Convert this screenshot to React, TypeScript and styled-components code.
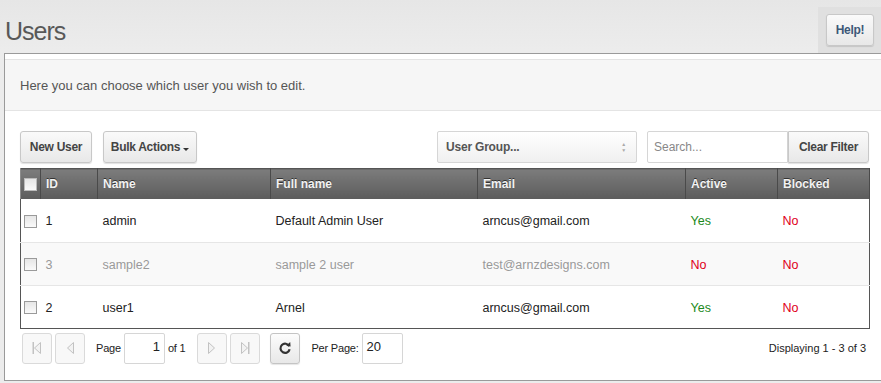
import React from "react";
import styled, { createGlobalStyle } from "styled-components";

const GlobalStyle = createGlobalStyle`
  html, body {
    margin: 0;
    padding: 0;
    background: #ebebeb;
    font-family: "Liberation Sans", Arial, sans-serif;
    font-size: 13px;
    color: #222;
  }
`;

interface User {
  id: number;
  name: string;
  fullName: string;
  email: string;
  active: boolean;
  blocked: boolean;
  muted?: boolean;
}

const users: User[] = [
  { id: 1, name: "admin", fullName: "Default Admin User", email: "arncus@gmail.com", active: true, blocked: false },
  { id: 3, name: "sample2", fullName: "sample 2 user", email: "test@arnzdesigns.com", active: false, blocked: false, muted: true },
  { id: 2, name: "user1", fullName: "Arnel", email: "arncus@gmail.com", active: true, blocked: false },
];

const columns = [
  { label: "ID", width: 57 },
  { label: "Name", width: 173 },
  { label: "Full name", width: 207 },
  { label: "Email", width: 208 },
  { label: "Active", width: 92 },
  { label: "Blocked", width: 92 },
];

function PagerIcon({ kind }: { kind: "first" | "prev" | "next" | "last" }) {
  const flip = kind === "first" || kind === "prev";
  const bar = kind === "first" || kind === "last";
  return (
    <svg width="12" height="14" viewBox="0 0 12 14" style={{ transform: flip ? "scaleX(-1)" : undefined }}>
      <path d="M2.5 1.5 L8.5 7 L2.5 12.5 Z" fill="#f2f2f2" stroke="#c2c2c2" strokeWidth="1" />
      {bar && <rect x="9" y="1" width="1.5" height="12" fill="#c2c2c2" />}
    </svg>
  );
}

function RefreshIcon() {
  return (
    <svg width="14" height="14" viewBox="0 0 14 14">
      <path d="M11.2 5.2 A4.6 4.6 0 1 0 11.6 8.2" fill="none" stroke="#333" strokeWidth="2.2" />
      <path d="M8.2 4.8 L12.6 5.4 L12.2 1 Z" fill="#333" />
    </svg>
  );
}

export default function App() {
  return (
    <>
      <GlobalStyle />
      <Page>
        <TopBar>
          <Title>Users</Title>
          <HelpBox>
            <Button $help $width={48}>Help!</Button>
          </HelpBox>
        </TopBar>
        <Panel>
          <Intro>Here you can choose which user you wish to edit.</Intro>
          <Content>
            <Toolbar>
              <Button $width={72}>New User</Button>
              <Button $width={94}>
                Bulk Actions <Caret />
              </Button>
              <Spacer />
              <Select>
                <span>User Group...</span>
                <Arrows>
                  <span>▲</span>
                  <span>▼</span>
                </Arrows>
              </Select>
              <Search placeholder="Search..." />
              <Button $flat $width={81}>Clear Filter</Button>
            </Toolbar>
            <Table>
              <colgroup>
                <col style={{ width: 20 }} />
                {columns.map((c) => (
                  <col key={c.label} style={{ width: c.width }} />
                ))}
              </colgroup>
              <thead>
                <tr>
                  <Th>
                    <Check $dark />
                  </Th>
                  {columns.map((c) => (
                    <Th key={c.label}>{c.label}</Th>
                  ))}
                </tr>
              </thead>
              <tbody>
                {users.map((u) => (
                  <Row key={u.id} $muted={u.muted}>
                    <Td $check>
                      <Check />
                    </Td>
                    <Td>{u.id}</Td>
                    <Td>{u.name}</Td>
                    <Td>{u.fullName}</Td>
                    <Td>{u.email}</Td>
                    <Td>
                      <Flag $on={u.active}>{u.active ? "Yes" : "No"}</Flag>
                    </Td>
                    <Td>
                      <Flag $on={u.blocked}>{u.blocked ? "Yes" : "No"}</Flag>
                    </Td>
                  </Row>
                ))}
              </tbody>
            </Table>
            <Pager>
              <PagerGroup>
                <PageButton disabled>
                  <PagerIcon kind="first" />
                </PageButton>
                <PageButton disabled>
                  <PagerIcon kind="prev" />
                </PageButton>
              </PagerGroup>
              <PagerLabel>Page</PagerLabel>
              <PageInput $right>1</PageInput>
              <PagerLabel $tight>of 1</PagerLabel>
              <PagerGroup>
                <PageButton disabled>
                  <PagerIcon kind="next" />
                </PageButton>
                <PageButton disabled>
                  <PagerIcon kind="last" />
                </PageButton>
              </PagerGroup>
              <PageButton $raised>
                <RefreshIcon />
              </PageButton>
              <PagerLabel>Per Page:</PagerLabel>
              <PageInput>20</PageInput>
              <Spacer />
              <Summary>Displaying 1 - 3 of 3</Summary>
            </Pager>
          </Content>
        </Panel>
      </Page>
    </>
  );
}

const Page = styled.div`
  width: 881px;
  height: 383px;
  overflow: hidden;
  background: linear-gradient(#e6e6e6, #ececec 50px);
`;

const TopBar = styled.div`
  display: flex;
  align-items: flex-start;
  justify-content: space-between;
  height: 53px;
`;

const Title = styled.h1`
  margin: 15px 0 0 5px;
  font-weight: normal;
  font-size: 25px;
  line-height: 32px;
  color: #585858;
  letter-spacing: -1px;
`;

const HelpBox = styled.div`
  margin-top: 7px;
  width: 63px;
  height: 46px;
  box-sizing: border-box;
  padding: 7px 0 0 8px;
  background: #e0e0e0;
`;

const Button = styled.button<{ $help?: boolean; $flat?: boolean; $width: number }>`
  display: inline-flex;
  align-items: center;
  justify-content: center;
  flex: none;
  width: ${(p) => p.$width}px;
  height: 32px;
  padding: 0;
  border: 1px solid #c8c8c8;
  border-radius: ${(p) => (p.$flat ? "0 3px 3px 0" : "3px")};
  background: linear-gradient(#fafafa, #e8e8e8);
  box-shadow: 0 1px 1px rgba(0, 0, 0, 0.12);
  font-family: "Liberation Sans", Arial, sans-serif;
  font-weight: bold;
  font-size: 12px;
  letter-spacing: -0.3px;
  color: ${(p) => (p.$help ? "#3d5878" : "#444")};
  cursor: pointer;
  white-space: nowrap;
`;

const Caret = styled.span`
  display: inline-block;
  margin-left: 3px;
  margin-top: 4px;
  border-left: 3px solid transparent;
  border-right: 3px solid transparent;
  border-top: 3px solid #333;
`;

const Panel = styled.div`
  margin-left: 4px;
  height: 328px;
  box-sizing: border-box;
  border-top: 1px solid #9a9a9a;
  border-left: 1px solid #9a9a9a;
  border-bottom: 1px solid #9a9a9a;
  background: #fff;
  padding-top: 5px;
`;

const Intro = styled.div`
  height: 50px;
  display: flex;
  align-items: center;
  padding-left: 15px;
  background: #f6f6f6;
  border-top: 1px solid #e4e4e4;
  border-bottom: 1px solid #e4e4e4;
  color: #555;
  font-size: 13px;
`;

const Content = styled.div`
  padding: 20px 12px 0 15px;
`;

const Toolbar = styled.div`
  display: flex;
  align-items: center;
  gap: 11px;
  height: 32px;
  margin-bottom: 5px;
`;

const Spacer = styled.div`
  flex: 1;
`;

const Select = styled.div`
  display: flex;
  align-items: center;
  justify-content: space-between;
  width: 200px;
  height: 32px;
  box-sizing: border-box;
  padding: 0 10px 0 8px;
  border: 1px solid #d6d6d6;
  border-radius: 2px;
  background: linear-gradient(#fff, #f0f0f0);
  font-weight: bold;
  font-size: 12px;
  letter-spacing: -0.2px;
  color: #555;
`;

const Arrows = styled.div`
  display: flex;
  flex-direction: column;
  font-size: 5px;
  line-height: 6px;
  color: #aaa;
`;

const Search = styled.input`
  width: 141px;
  height: 32px;
  box-sizing: border-box;
  margin-left: -1px;
  margin-right: -11px;
  padding: 0 6px;
  border: 1px solid #d6d6d6;
  border-radius: 2px 0 0 2px;
  font-family: "Liberation Sans", Arial, sans-serif;
  font-size: 12px;
  outline: none;
  &::placeholder {
    color: #888;
  }
`;

const Table = styled.table`
  width: 850px;
  border-collapse: collapse;
  table-layout: fixed;
  border: 1px solid #555;
`;

const Th = styled.th`
  height: 30px;
  padding: 0 5px;
  text-align: left;
  font-size: 12px;
  font-weight: bold;
  color: #f2f2f2;
  text-shadow: 0 -1px 0 #333;
  background: linear-gradient(#7c7c7c, #5c5c5c);
  border-left: 1px solid #8c8c8c;
  border-right: 1px solid #4a4a4a;
  &:first-child {
    padding: 0 3px;
  }
`;

const Row = styled.tr<{ $muted?: boolean }>`
  height: 43px;
  background: ${(p) => (p.$muted ? "#f9f9f9" : "#fff")};
  color: ${(p) => (p.$muted ? "#999" : "#222")};
  & + & {
    border-top: 1px solid #e6e6e6;
  }
`;

const Td = styled.td<{ $check?: boolean }>`
  padding: 2px ${(p) => (p.$check ? "3px" : "5px")} 0;
  font-size: 12.5px;
  white-space: nowrap;
`;

const Check = styled.span<{ $dark?: boolean }>`
  display: block;
  width: 11px;
  height: 11px;
  border: 1px solid ${(p) => (p.$dark ? "#bbb" : "#9a9a9a")};
  background: linear-gradient(#e6e6e6, #fafafa);
`;

const Flag = styled.span<{ $on: boolean }>`
  color: ${(p) => (p.$on ? "#1c8a1c" : "#e0001a")};
`;

const Pager = styled.div`
  display: flex;
  align-items: center;
  height: 31px;
  margin-top: 4px;
  padding-left: 2px;
`;

const PagerGroup = styled.div`
  display: flex;
  gap: 3px;
`;

const PageButton = styled.button<{ $raised?: boolean }>`
  display: flex;
  align-items: center;
  justify-content: center;
  width: 30px;
  height: 31px;
  padding: 0;
  border: 1px solid ${(p) => (p.$raised ? "#c4c4c4" : "#dadada")};
  border-radius: 3px;
  background: ${(p) => (p.$raised ? "linear-gradient(#fcfcfc, #e8e8e8)" : "#f8f8f8")};
  box-shadow: ${(p) => (p.$raised ? "0 1px 1px rgba(0,0,0,0.1)" : "none")};
  margin-left: ${(p) => (p.$raised ? "10px" : "0")};
`;

const PagerLabel = styled.span<{ $tight?: boolean }>`
  margin: 0 ${(p) => (p.$tight ? "12px" : "3px")} 0 ${(p) => (p.$tight ? "3px" : "11px")};
  font-size: 11px;
  letter-spacing: -0.2px;
  color: #222;
`;

const PageInput = styled.div<{ $right?: boolean }>`
  width: 41px;
  height: 31px;
  box-sizing: border-box;
  padding: 5px 4px 0;
  border: 1px solid #d6d6d6;
  border-radius: 2px;
  text-align: ${(p) => (p.$right ? "right" : "left")};
  font-size: 13px;
  color: #222;
`;

const Summary = styled.span`
  margin-right: 3px;
  font-size: 11px;
  color: #222;
`;
